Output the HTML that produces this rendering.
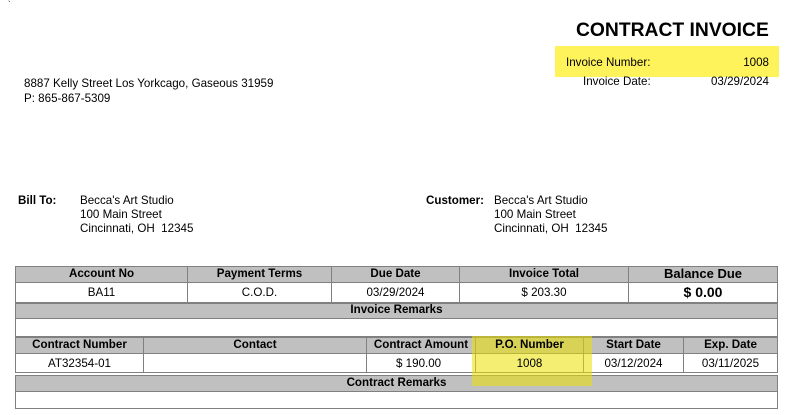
<!DOCTYPE html>
<html><head><style>
body{margin:0;width:804px;height:415px;background:#fff;font-family:"Liberation Sans","DejaVu Sans",sans-serif;font-size:11.6px;color:#000;position:relative;overflow:hidden}
.a{position:absolute;white-space:nowrap;z-index:2}
.g{position:absolute;background:#c0c0c0;border:1px solid #808080;box-sizing:border-box}
.w{position:absolute;background:#fff;border:1px solid #808080;box-sizing:border-box}
.c{position:absolute;text-align:center;white-space:nowrap;z-index:2}
.b{font-weight:bold}
</style></head><body>
<div class="a" style="left:8px;top:0px;font-size:8px">`</div>
<div class="a b" style="left:576px;top:20px;font-size:19.3px">CONTRACT INVOICE</div>
<div class="a" style="left:555px;top:46px;width:224px;height:31px;background:#fff35c;z-index:1"></div>
<div class="a" style="left:566px;top:56px">Invoice Number:</div>
<div class="a" style="right:35px;top:56px">1008</div>
<div class="a" style="left:583px;top:75px">Invoice Date:</div>
<div class="a" style="right:35px;top:75px">03/29/2024</div>
<div class="a" style="left:24px;top:77px">8887 Kelly Street Los Yorkcago, Gaseous 31959</div>
<div class="a" style="left:24px;top:92px">P: 865-867-5309</div>
<div class="a b" style="left:18px;top:194px">Bill To:</div>
<div class="a" style="left:80px;top:194px;line-height:14px">Becca's Art Studio<br>100 Main Street<br>Cincinnati, OH&nbsp; 12345</div>
<div class="a b" style="left:426px;top:194px">Customer:</div>
<div class="a" style="left:494px;top:194px;line-height:14px">Becca's Art Studio<br>100 Main Street<br>Cincinnati, OH&nbsp; 12345</div>

<div class="g" style="left:15px;top:266px;width:173px;height:17px"></div>
<div class="g" style="left:187px;top:266px;width:145px;height:17px"></div>
<div class="g" style="left:331px;top:266px;width:129px;height:17px"></div>
<div class="g" style="left:459px;top:266px;width:170px;height:17px"></div>
<div class="g" style="left:628px;top:266px;width:150px;height:17px"></div>
<div class="c b" style="left:15px;top:267px;width:173px">Account No</div>
<div class="c b" style="left:187px;top:267px;width:145px">Payment Terms</div>
<div class="c b" style="left:331px;top:267px;width:129px">Due Date</div>
<div class="c b" style="left:459px;top:267px;width:170px">Invoice Total</div>
<div class="c b" style="left:628px;top:266px;width:150px;font-size:13px">Balance Due</div>
<div class="w" style="left:15px;top:282px;width:173px;height:21px"></div>
<div class="w" style="left:187px;top:282px;width:145px;height:21px"></div>
<div class="w" style="left:331px;top:282px;width:129px;height:21px"></div>
<div class="w" style="left:459px;top:282px;width:170px;height:21px"></div>
<div class="w" style="left:628px;top:282px;width:150px;height:21px"></div>
<div class="c" style="left:15px;top:286px;width:173px">BA11</div>
<div class="c" style="left:187px;top:286px;width:145px">C.O.D.</div>
<div class="c" style="left:331px;top:286px;width:129px">03/29/2024</div>
<div class="c" style="left:459px;top:286px;width:170px">$ 203.30</div>
<div class="c b" style="left:628px;top:284px;width:150px;font-size:14px">$ 0.00</div>
<div class="g" style="left:15px;top:303px;width:763px;height:16px"></div>
<div class="c b" style="left:15px;top:303px;width:763px">Invoice Remarks</div>
<div class="w" style="left:15px;top:318px;width:763px;height:19px"></div>

<div class="g" style="left:15px;top:337px;width:129px;height:17px"></div>
<div class="g" style="left:143px;top:337px;width:224px;height:17px"></div>
<div class="g" style="left:366px;top:337px;width:110px;height:17px"></div>
<div class="g" style="left:475px;top:337px;width:109px;height:17px"></div>
<div class="g" style="left:583px;top:337px;width:101px;height:17px"></div>
<div class="g" style="left:683px;top:337px;width:95px;height:17px"></div>
<div class="c b" style="left:15px;top:338px;width:129px">Contract Number</div>
<div class="c b" style="left:143px;top:338px;width:224px">Contact</div>
<div class="c b" style="left:366px;top:338px;width:110px">Contract Amount</div>
<div class="c b" style="left:475px;top:338px;width:109px">P.O. Number</div>
<div class="c b" style="left:583px;top:338px;width:101px">Start Date</div>
<div class="c b" style="left:683px;top:338px;width:95px">Exp. Date</div>
<div class="w" style="left:15px;top:353px;width:129px;height:20px"></div>
<div class="w" style="left:143px;top:353px;width:224px;height:20px"></div>
<div class="w" style="left:366px;top:353px;width:110px;height:20px"></div>
<div class="w" style="left:475px;top:353px;width:109px;height:20px"></div>
<div class="w" style="left:583px;top:353px;width:101px;height:20px"></div>
<div class="w" style="left:683px;top:353px;width:95px;height:20px"></div>
<div class="c" style="left:15px;top:357px;width:129px">AT32354-01</div>
<div class="a" style="left:396px;top:357px">$ 190.00</div>
<div class="c" style="left:475px;top:357px;width:109px">1008</div>
<div class="c" style="left:583px;top:357px;width:101px">03/12/2024</div>
<div class="c" style="left:683px;top:357px;width:95px">03/11/2025</div>
<div class="g" style="left:15px;top:375px;width:763px;height:17px"></div>
<div class="c b" style="left:15px;top:376px;width:763px">Contract Remarks</div>
<div class="w" style="left:15px;top:391px;width:763px;height:18px"></div>
<div style="position:absolute;left:472px;top:336px;width:120px;height:50px;background:rgba(235,225,0,0.55);z-index:1"></div>
</body></html>
